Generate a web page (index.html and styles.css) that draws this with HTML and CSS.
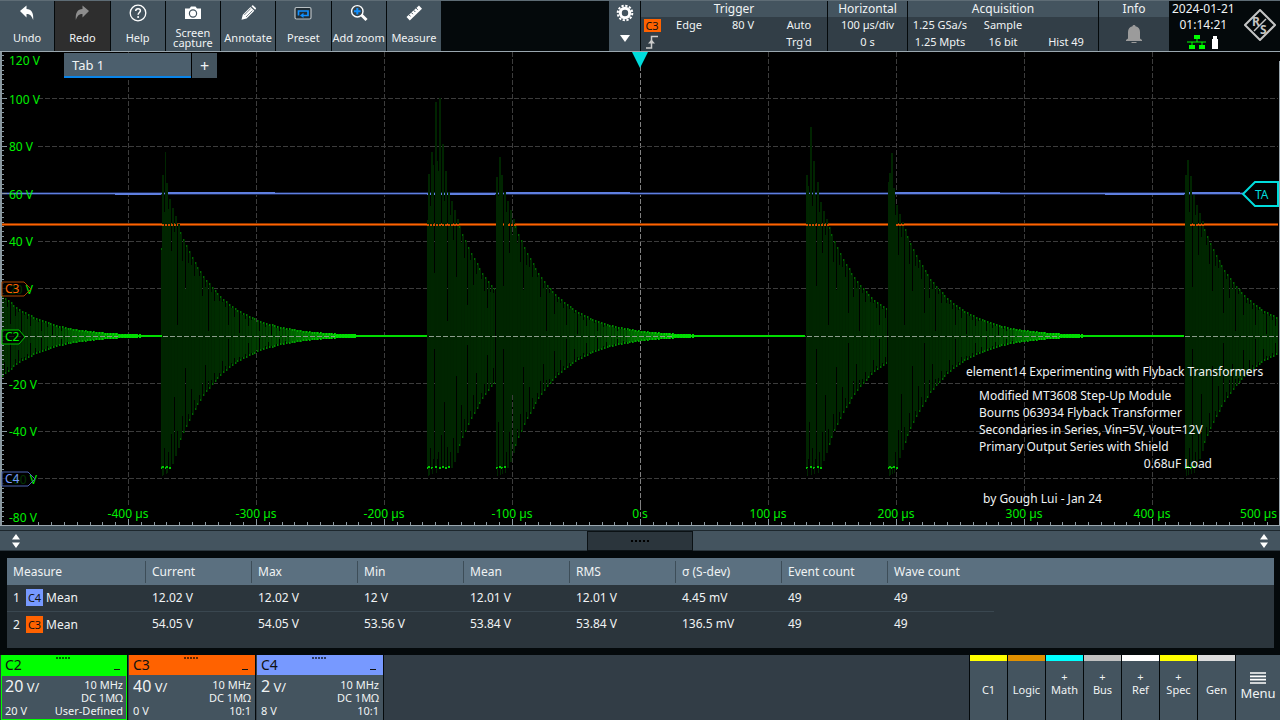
FILE: index.html
```html
<!DOCTYPE html>
<html lang="en">
<head>
    <meta charset="UTF-8">
    <meta name="viewport" content="width=device-width, initial-scale=1.0">
    <title>Oscilloscope</title>
    <link rel="stylesheet" href="styles.css">
</head>
<body>
    <header class="toolbar">
        <button class="tool">
            <svg viewBox="0 0 18 18"><path d="M2 7 8.500 1.500V5c4.800.3 7.200 3.200 6.700 11-1.600-4.400-3.300-5.800-6.700-5.900v3.400z" fill="#fff"/></svg>
            <span>Undo</span>
        </button>
        <button class="tool off">
            <svg viewBox="0 0 18 18"><path d="M16 7 9.500 1.500V5c-4.800.3-7.200 3.200-6.700 11 1.600-4.400 3.300-5.800 6.700-5.900v3.400z" fill="#8d8d8d"/></svg>
            <span>Redo</span>
        </button>
        <button class="tool">
            <svg viewBox="0 0 18 18"><circle cx="9" cy="9" r="7.800" fill="none" stroke="#fff" stroke-width="1.300"/><path d="M6.700 7c0-3.200 4.800-3 4.700-.2 0 1.700-2.300 1.800-2.300 4" fill="none" stroke="#fff" stroke-width="1.500"/><circle cx="9.100" cy="13" r="1" fill="#fff"/></svg>
            <span>Help</span>
        </button>
        <button class="tool">
            <svg viewBox="0 0 18 18"><path d="M1 4.500h4.500L7 2.500h4.500L13 4.500h4V15H1z" fill="#fff"/><circle cx="9" cy="9.500" r="3.600" fill="none" stroke="#44545f" stroke-width="1.200"/></svg>
            <span>Screen capture</span>
        </button>
        <button class="tool">
            <svg viewBox="0 0 18 18"><path d="m2.500 15.800 1.300-5L11.500 3l3.800 3.800-7.800 7.800zM12.400 2.200l1-1c.5-.5 4.100 3 3.700 3.600l-1 1z" fill="#fff"/><path d="m5.300 11 6.500-6.500M7 13l6.500-6.500" stroke="#44545f" stroke-width=".7"/></svg>
            <span>Annotate</span>
        </button>
        <button class="tool">
            <svg viewBox="0 0 18 18"><rect x="1" y="3.500" width="16" height="11.500" rx="1.500" fill="#222d34" stroke="#b9c0c4" stroke-width="1.200"/><path d="M4.500 11.500V7H14v4.500H8" fill="none" stroke="#1090ff" stroke-width="1.700"/><path d="m9.500 8.700-3.500 2.800 3.500 2.500z" fill="#1090ff"/></svg>
            <span>Preset</span>
        </button>
        <button class="tool">
            <svg viewBox="0 0 18 18"><path d="m11 10.500 5.500 5.500" stroke="#fff" stroke-width="3"/><circle cx="7.300" cy="7.300" r="5.700" fill="#34434d" stroke="#fff" stroke-width="1.400"/><path d="M7.300 4v6.600M4 7.300h6.600" stroke="#1090ff" stroke-width="2"/></svg>
            <span>Add zoom</span>
        </button>
        <button class="tool">
            <svg viewBox="0 0 18 18"><path d="M1.500 13 14 1.500l3 3.300L4.800 16.500z" fill="#fff"/><path d="m4 10.700 1.500 1.700M6.400 8.500 7.900 10.200M8.800 6.300 10.300 8M11.200 4.100l1.500 1.700" stroke="#44545f"/></svg>
            <span>Measure</span>
        </button>
        <div></div>
        <button class="gear" aria-label="Toolbar settings">
            <svg viewBox="0 0 18 18"><circle cx="9" cy="9" r="4.700" fill="none" stroke="#fff" stroke-width="3"/><circle cx="9" cy="9" r="7.300" fill="none" stroke="#fff" stroke-width="2" stroke-dasharray="2.300 1.522"/></svg>
            <svg viewBox="0 0 18 18"><path d="M4 6h10l-5 7z" fill="#fff"/></svg>
        </button>
        <section class="panel">
            <h2>Trigger</h2>
            <div class="readout trigger">
                <b class="badge c3">C3</b><span>Edge</span><span>80 V</span><span>Auto</span>
                <svg viewBox="0 0 14 14"><path d="M1 13h5.500V1.500H13" fill="none" stroke="#ccc" stroke-width="1.500"/><path d="m3 8.500 3.500-4 3.500 4z" fill="#ccc"/></svg>
                <span></span><span></span><span>Trg'd</span>
            </div>
        </section>
        <section class="panel">
            <h2>Horizontal</h2>
            <div class="readout"><span>100 µs/div</span><span>0 s</span></div>
        </section>
        <section class="panel">
            <h2>Acquisition</h2>
            <div class="readout acquisition">
                <span>1.25 GSa/s</span><span>Sample</span><span></span>
                <span>1.25 Mpts</span><span>16 bit</span><span>Hist 49</span>
            </div>
        </section>
        <section class="panel">
            <h2>Info</h2>
            <div class="readout">
                <svg class="bell" viewBox="0 0 18 20"><path d="M9 1c1 0 1.500.6 1.500 1.300C13.500 3 15 5.200 15 8v6.500l2 1.500v1H1v-1l2-1.500V8c0-2.800 1.500-5 4.500-5.700C7.500 1.600 8 1 9 1z" fill="#9b9b9b"/><path d="M6.500 18h5v1h-5z" fill="#9b9b9b"/></svg>
            </div>
        </section>
        <div class="clock">
            <div class="stamp">
                <time>2024-01-21</time>
                <time>01:14:21</time>
                <svg viewBox="0 0 32 14"><path d="M7 0h6v4H7zM2 10h6v4H2zM12 10h6v4h-6z" fill="#0f0"/><path d="M0 7h19M10 3v4M5 7v4M15 7v4" stroke="#0f0"/><path d="M26 1h4v3h1v10h-6V4h1z" fill="#fff"/></svg>
            </div>
            <svg class="logo" viewBox="0 0 32 32"><path d="M16 1 31 16 16 31 1 16z" fill="none" stroke="#c4c4c4" stroke-width="2"/><text x="8" y="17">R</text><text x="16" y="25">S</text><path d="m10 22 12-12" stroke="#c4c4c4" stroke-width="1.500"/></svg>
        </div>
    </header>

    <main class="plot">
        <svg id="graph" class="graph" viewBox="0 0 1280 475" preserveAspectRatio="none"></svg>
        <div id="labels"></div>
        <nav class="tabs"><button class="tab">Tab 1</button><button class="add">+</button></nav>
        <svg class="marker trig-time" viewBox="0 0 16 16"><path d="M0 0h16L8 16z" fill="#00dcdc"/></svg>
        <div class="marker tag-c3"><svg viewBox="0 0 31 16"><path d="M1 1h22v14H1z" fill="#000" fill-opacity=".8"/><path d="M1 1h22l7 7-7 7H1z" fill="none" stroke="#a84200"/></svg><span>C3</span></div>
        <div class="marker tag-c2"><svg viewBox="0 0 31 16"><path d="M1 1h17l6 7-6 7H1z" fill="#000" fill-opacity=".8" stroke="#00c800"/></svg><span>C2</span></div>
        <div class="marker tag-c4"><svg viewBox="0 0 35 16"><path d="M1 1h25v14H1z" fill="#000" fill-opacity=".8"/><path d="M1 1h26l7 7-7 7H1z" fill="none" stroke="#4a62b0"/></svg><span>C4</span></div>
        <div class="marker tag-ta"><svg viewBox="0 0 38 28"><path d="M2 14 14 2h23v24H14z" fill="#000" stroke="#00dcdc" stroke-width="2"/></svg><span>TA</span></div>
        <div class="notes">
            <p class="title">element14 Experimenting with Flyback Transformers</p>
            <p>Modified MT3608 Step-Up Module</p>
            <p>Bourns 063934 Flyback Transformer</p>
            <p>Secondaries in Series, Vin=5V, Vout=12V</p>
            <p>Primary Output Series with Shield</p>
            <p class="load">0.68uF Load</p>
            <p class="author">by Gough Lui - Jan 24</p>
        </div>
    </main>

    <div class="splitter">
        <svg viewBox="0 0 8 14"><path d="M0 5.500h8L4 0zM0 8.500h8L4 14z" fill="#fff"/></svg>
        <button class="grip" aria-label="Resize"><i></i><i></i><i></i><i></i><i></i></button>
        <svg viewBox="0 0 8 14"><path d="M0 5.500h8L4 0zM0 8.500h8L4 14z" fill="#fff"/></svg>
    </div>

    <section class="results">
        <table>
            <colgroup><col class="name"><col span="8" class="value"><col></colgroup>
            <thead>
                <tr><th>Measure</th><th>Current</th><th>Max</th><th>Min</th><th>Mean</th><th>RMS</th><th>σ (S-dev)</th><th>Event count</th><th>Wave count</th><th class="rest"></th></tr>
            </thead>
            <tbody>
                <tr><td><span class="num">1</span><b class="badge c4">C4</b>Mean</td><td>12.02 V</td><td>12.02 V</td><td>12 V</td><td>12.01 V</td><td>12.01 V</td><td>4.45 mV</td><td>49</td><td>49</td><td class="rest"></td></tr>
                <tr><td><span class="num">2</span><b class="badge c3">C3</b>Mean</td><td>54.05 V</td><td>54.05 V</td><td>53.56 V</td><td>53.84 V</td><td>53.84 V</td><td>136.5 mV</td><td>49</td><td>49</td><td class="rest"></td></tr>
            </tbody>
        </table>
    </section>

    <footer class="signals">
        <section class="channel c2 active">
            <h3><span>C2</span><em><i></i><i></i><i></i><i></i><i></i></em><button aria-label="Minimize C2"></button></h3>
            <div class="setup"><p><big>20</big> V/</p><p>10 MHz<br>DC 1MΩ</p><p>20 V</p><p>User-Defined</p></div>
        </section>
        <section class="channel c3">
            <h3><span>C3</span><em><i></i><i></i><i></i><i></i><i></i></em><button aria-label="Minimize C3"></button></h3>
            <div class="setup"><p><big>40</big> V/</p><p>10 MHz<br>DC 1MΩ</p><p>0 V</p><p>10:1</p></div>
        </section>
        <section class="channel c4">
            <h3><span>C4</span><em><i></i><i></i><i></i><i></i><i></i></em><button aria-label="Minimize C4"></button></h3>
            <div class="setup"><p><big>2</big> V/</p><p>10 MHz<br>DC 1MΩ</p><p>8 V</p><p>10:1</p></div>
        </section>
        <nav class="keys">
            <button class="key yellow">C1</button>
            <button class="key amber">Logic</button>
            <button class="key cyan"><span>+</span>Math</button>
            <button class="key silver"><span>+</span>Bus</button>
            <button class="key white"><span>+</span>Ref</button>
            <button class="key yellow"><span>+</span>Spec</button>
            <button class="key light">Gen</button>
            <button class="menu"><svg viewBox="0 0 16 12"><path d="M0 1h16M0 4.300h16M0 7.600h16M0 11h16" stroke="#fff" stroke-width="1.700"/></svg>Menu</button>
        </nav>
    </footer>
    <script src="scope.js"></script>
</body>
</html>
```
FILE: styles.css
```css
* {
    box-sizing: border-box;
}
body {
    margin: 0;
    min-height: 100vh;
    display: flex;
    flex-direction: column;
    background: #04090b;
    color: #f0f3f4;
    font-family: "Noto Sans", sans-serif;
    font-size: 12px;
    line-height: 16px;
}
button {
    border: 0;
    padding: 0;
    margin: 0;
    color: inherit;
    font: inherit;
    background: #44545f;
}
h2, h3, p {
    margin: 0;
    font-weight: normal;
}
svg {
    display: block;
}

/* Top toolbar */
.toolbar {
    display: grid;
    grid-template-columns: repeat(8, 217fr) 664fr 124fr 744fr 316fr 760fr 280fr 440fr;
    gap: 1px;
    height: 51px;
    border-top: 1px solid #5e6c75;
    background: #04090b;
}
.tool {
    display: flex;
    flex-direction: column;
    align-items: center;
    min-width: 0;
    font-size: 11px;
    line-height: 10px;
    padding-top: 3px;
}
.tool svg {
    width: 18px;
    height: 18px;
    flex: none;
}
.tool span {
    flex: 1;
    display: flex;
    align-items: center;
    padding-top: 3px;
}
.tool.off {
    background: #2e2e2e;
}
.gear {
    display: flex;
    flex-direction: column;
    align-items: center;
    padding-top: 3px;
    gap: 7px;
}
.gear svg {
    width: 18px;
    height: 18px;
}
.panel {
    display: flex;
    flex-direction: column;
    min-width: 0;
    background: #323e47;
}
.panel h2 {
    background: #44545f;
    font-size: 12px;
    line-height: 16px;
    text-align: center;
}
.readout {
    flex: 1;
    display: grid;
    grid-auto-rows: 1fr;
    place-items: center;
    padding-bottom: 1px;
    font-size: 11px;
    line-height: 16px;
    white-space: nowrap;
}
.trigger {
    grid-template-columns: 22px 52px 56px 1fr;
}
.trigger svg {
    width: 14px;
    height: 14px;
}
.acquisition {
    grid-template-columns: 64px 62px 64px;
}
.bell {
    width: 18px;
    height: 20px;
}
.badge {
    display: inline-block;
    width: 17px;
    height: 17px;
    font-size: 11px;
    line-height: 17px;
    font-weight: normal;
    text-align: center;
    color: #111;
}
.trigger .badge {
    height: 13px;
    line-height: 13px;
}
.clock {
    display: flex;
    justify-content: space-between;
    align-items: center;
    padding: 0 4px 2px 2px;
}
.stamp {
    display: flex;
    flex-direction: column;
    align-items: center;
}
.stamp svg {
    width: 32px;
    height: 14px;
    margin-top: 2px;
}
.logo {
    width: 32px;
    height: 32px;
}
.logo text {
    fill: #c4c4c4;
    font-size: 12px;
    font-weight: bold;
}

/* Waveform display */
.plot {
    position: relative;
    flex: 1;
    min-height: 300px;
    overflow: hidden;
    background: #000;
}
.graph {
    position: absolute;
    width: 100%;
    height: 100%;
}
.axis {
    position: absolute;
    color: #00f000;
    white-space: nowrap;
}
.axis.y {
    left: 9px;
    transform: translateY(-50%);
}
.axis.x {
    bottom: 4px;
    transform: translateX(-50%);
}
.axis.x.last {
    right: 3px;
    transform: none;
}
.tabs {
    position: absolute;
    left: 5%;
    top: 2px;
    display: flex;
    gap: 1px;
}
.tabs button {
    height: 25px;
    font-size: 13px;
}
.tabs .tab {
    width: 127px;
    text-align: left;
    padding-left: 8px;
    border-bottom: 2px solid #0a84e8;
    background: #4c5f6d;
}
.tabs .add {
    width: 25px;
    font-size: 16px;
}
.marker {
    position: absolute;
}
.marker span {
    position: absolute;
    left: 4px;
    top: 0;
    line-height: 16px;
}
.trig-time {
    left: 50%;
    top: 1px;
    width: 16px;
    margin-left: -8px;
}
.tag-c3 {
    left: 1px;
    top: 48.500%;
    width: 31px;
    color: #ff6200;
}
.tag-c2 {
    left: 1px;
    top: 58.500%;
    width: 31px;
    color: #00f000;
}
.tag-c4 {
    left: 1px;
    top: 88.500%;
    width: 35px;
    color: #7799ff;
}
.tag-ta {
    right: 1px;
    top: 27.200%;
    width: 38px;
    color: #00dcdc;
}
.tag-ta span {
    left: 14px;
    line-height: 30px;
}
.notes {
    position: absolute;
    right: 10px;
    bottom: 19px;
    width: 304px;
    line-height: 17px;
    white-space: nowrap;
}
.notes p {
    padding-left: 13px;
}
.notes .title {
    padding-left: 0;
    margin-bottom: 7px;
}
.notes .load {
    padding: 0 58px 0 0;
    text-align: right;
}
.notes .author {
    padding-left: 17px;
    margin-top: 18px;
}

/* Splitter */
.splitter {
    display: flex;
    justify-content: space-between;
    align-items: center;
    height: 25px;
    padding: 5px 12px 0;
    border-bottom: 1px solid #2b363d;
    background: linear-gradient(#40505a 4px, #1d272d 4px, #1d272d 5px, #44545f 5px);
}
.splitter svg {
    width: 8px;
    height: 14px;
}
.grip {
    display: flex;
    justify-content: center;
    align-items: center;
    gap: 2px;
    width: 106px;
    height: 20px;
    border: 1px solid #0b1114;
    background: #2b353c;
}
.grip i {
    width: 2px;
    height: 2px;
    background: #000;
}

/* Measurement results */
.results {
    margin: 7px 6px 7px 7px;
    height: 90px;
    background: #2b353c;
}
table {
    width: 100%;
    table-layout: fixed;
    border-collapse: collapse;
}
.name {
    width: 139px;
}
.value {
    width: 106px;
}
th {
    height: 27px;
    padding: 0 6px;
    text-align: left;
    font-weight: normal;
    background: linear-gradient(#3d4d58, #3d4d58) right center / 1px 22px no-repeat #5b7080;
}
th:nth-last-child(2), th.rest {
    background: #5b7080;
}
td {
    height: 26px;
    padding: 0 6px;
    border-bottom: 1px solid #3a4750;
}
tr:last-child td, td.rest {
    border-bottom: 0;
}
td .badge {
    margin-right: 3px;
}
.num {
    display: inline-block;
    width: 13px;
}
.badge.c3 {
    background: #ff6200;
}
.badge.c4 {
    background: #7799ff;
}

/* Signal bar */
.signals {
    display: flex;
    gap: 1px;
    height: 65px;
    padding-left: 1px;
    background: #323d46;
}
.channel {
    display: flex;
    flex-direction: column;
    width: 127px;
    border-right: 1px solid #04090b;
    background: #44545f;
}
.channel h3 {
    display: grid;
    grid-template-columns: 1fr auto 1fr;
    height: 20px;
    padding: 0 7px 0 4px;
    font-size: 14px;
    line-height: 20px;
    color: #111;
}
.channel em {
    display: flex;
    gap: 1px;
    padding-top: 2px;
}
.channel em i {
    width: 2px;
    height: 2px;
    background: rgba(0, 0, 0, .6);
}
.channel h3 button {
    justify-self: end;
    align-self: end;
    width: 6px;
    height: 10px;
    margin-bottom: 5px;
    border-bottom: 1px solid #111;
    background: none;
}
.channel.c2 h3 {
    background: #00ff00;
}
.channel.c3 h3 {
    background: #ff6200;
}
.channel.c4 h3 {
    background: #7799ff;
}
.channel.active .setup {
    box-shadow: inset 0 0 0 1px #00ff00;
}
.setup {
    flex: 1;
    display: grid;
    grid-template-columns: auto 1fr;
    grid-template-rows: 26px 13px;
    padding: 3px 4px 0;
    font-size: 11px;
    line-height: 13px;
}
.setup p:nth-child(even) {
    text-align: right;
}
.setup p:first-child {
    font-size: 13px;
    line-height: 16px;
}
.setup big {
    font-size: 16px;
}
.keys {
    display: flex;
    gap: 1px;
    margin-left: auto;
    padding-left: 1px;
    background: #04090b;
}
.key {
    display: flex;
    flex-direction: column;
    justify-content: flex-end;
    align-items: center;
    width: 37px;
    padding-bottom: 24px;
    border-top: 6px solid;
    font-size: 11px;
    line-height: 13px;
}
.key.yellow {
    border-color: #ffff00;
}
.key.amber {
    border-color: #e09000;
}
.key.cyan {
    border-color: #00ffff;
}
.key.silver {
    border-color: #c0c0c0;
}
.key.white {
    border-color: #ffffff;
}
.key.light {
    border-color: #dcdcdc;
}
.menu {
    width: 44px;
    font-size: 13px;
    padding-bottom: 3px;
}
.menu svg {
    width: 16px;
    height: 12px;
    margin: 0 auto 1px;
}
```
FILE: scope.js
```js
const graph = document.getElementById('graph');
const labels = document.getElementById('labels');
const ZERO = 285; // y of 0 V on the C2 scale
const TAU = 41.5; // decay of the ringing
const CLIP = 132;

// Each burst: start, end, ref (x where the ringing is 108 high) and the first peaks
const bursts = [
    { start: 2, end: 162, ref: -38, peaks: [] },
    { start: 161, end: 427, ref: 179, clip: 170, peaks: [[161, 88], [162, 161], [165, 184], [166, 153]] },
    { start: 427, end: 495, ref: 460, clip: 450, peaks: [[427, 116], [428, 162], [431, 184], [435, 234], [439, 238], [442, 192], [445, 165]] },
    { start: 496, end: 805, ref: 516, clip: 506, peaks: [[496, 159], [499, 179], [501, 161]] },
    { start: 806, end: 887, ref: 829, clip: 822, peaks: [[806, 161], [810, 209], [813, 175], [817, 154]] },
    { start: 888, end: 1184, ref: 904, clip: 896, peaks: [[888, 154], [889, 163], [891, 183], [893, 148]] },
    { start: 1184, end: 1278, ref: 1204, clip: 1193, peaks: [[1185, 161], [1187, 176], [1190, 160]] }
];
const depth = [0.12, 0.2, 0.66, 0.1, 0.35, 0.15, 0.9, 0.12, 0.25, 0.5, 0.16];

function draw(tag, attrs) {
    const el = document.createElementNS('http://www.w3.org/2000/svg', tag);
    for (const key in attrs) el.setAttribute(key, attrs[key]);
    graph.appendChild(el);
}

function line(d, stroke, extra) {
    draw('path', Object.assign({ d, stroke, fill: 'none', 'shape-rendering': 'crispEdges' }, extra));
}

function bar(x, top, bottom, colour) {
    line(`M${x + 0.5} ${top}V${bottom}`, colour);
}

function shade(amp, tip) {
    const g = Math.min(225, (tip ? 95 : 35) + 900 / Math.pow(amp + 2, 1.2));
    return `rgb(0,${Math.round(g)},0)`;
}

function drawGrid() {
    for (let i = 1; i < 10; i++) {
        line(`M${i * 128 + 0.5} 1V454`, i === 5 ? '#808080' : '#3c3c3c', { 'stroke-dasharray': '5 2' });
    }
    line('M640.5 454V474', '#808080', { 'stroke-dasharray': '5 2' });
    for (let i = 1; i < 10; i++) {
        line(`M38 ${i * 47.5 + 0.25}H1278`, '#3c3c3c', { 'stroke-dasharray': '5 2' });
    }
}

function drawTrace(y, colour, edge) {
    line(`M2 ${y}H1278`, edge, { 'stroke-width': 3 });
    line(`M2 ${y}H1278`, colour);
}

function drawBurst(b) {
    const amp = x => 108 * Math.exp(-(x - b.ref) / TAU);
    const spikes = b.peaks.slice();
    let x = spikes.length ? spikes[spikes.length - 1][0] + 3 : b.start;
    for (; x < b.end && amp(x) > 0.9; x += 2.85) spikes.push([Math.round(x), amp(x)]);

    spikes.forEach(([px, a], i) => {
        const low = px <= b.clip ? CLIP : Math.min(a, CLIP);
        const next = i + 1 < spikes.length ? spikes[i + 1][0] : px + 3;
        for (let c = px; c < next && c < b.end; c++) {
            const body = Math.min(a, amp(c));
            if (c <= px + 1) {
                bar(c, ZERO - a, ZERO + low, shade(a));
            } else if (c === next - 1 && a > 8) {
                // dark slots between the oscillations
                bar(c, ZERO - body * (1 - depth[i % 11]), ZERO + Math.min(body, CLIP) * (1 - depth[(i + 4) % 11]), shade(a * 2));
            } else {
                bar(c, ZERO - body * 0.93, ZERO + Math.min(low, body) * 0.93, shade(a * 0.8));
            }
        }
        if (a < 110) {
            bar(px, ZERO - a, ZERO - a + 2, shade(a, true));
            bar(px, ZERO + low - 2, ZERO + low, shade(a, true));
        }
        if (px <= b.clip) {
            line(`M${px} ${ZERO + CLIP - i % 2}h2`, '#00c800', { 'stroke-width': 2 });
            if (i < 4) bar(px + 1, ZERO + CLIP, ZERO + CLIP + 8 - i, '#002600');
        }
    });
}

// settled trace between the end of the ringing and the next burst
function drawTail(b) {
    const tail = Math.round(b.ref + TAU * Math.log(108 / 2.5));
    if (tail < b.end) {
        draw('rect', { x: tail, y: ZERO - 1, width: b.end - tail, height: 2, fill: '#00dc00' });
    }
}

function drawFrame() {
    line(`M2 ${ZERO + 0.5}H1278`, '#8c9c8c', { 'stroke-dasharray': '5 2' });
    line('M0 .5H1280M0 474H1280M1279.5 10V474', '#9aa7af');
    line('M1 1V474', '#8a98a0', { 'stroke-width': 2 });
    for (let i = 1; i < 100; i++) {
        line(`M2 ${i * 4.75}h${i % 10 ? 2 : 5}`, '#8a98a0');
    }
    for (let i = 3; i < 100; i++) {
        line(`M${Math.round(i * 12.8) + 0.5} 474v${i % 10 ? -3 : -6}`, '#8a98a0');
    }
}

function drawLabels() {
    for (let v = 120; v >= -80; v -= 20) {
        if (v === 0) continue; // the C2 tag stands there
        const y = v === 120 ? 10 : v === -80 ? 467 : ZERO + 1 - v * 2.375;
        labels.innerHTML += `<span class="axis y" style="top: ${y / 4.75}%">${v} V</span>`;
    }
    for (let t = -400; t <= 400; t += 100) {
        labels.innerHTML += `<span class="axis x" style="left: ${50 + t / 10}%">${t ? t + ' µs' : '0 s'}</span>`;
    }
    labels.innerHTML += '<span class="axis x last">500 µs</span>';
}

drawGrid();
drawTrace(142.5, '#5f7fe0', '#1c2850');
// C4 rises a little after each burst
line('M168 141.5H275M505 141.5H630M895 141.5H1000M1188 141.5H1240', '#5f7fe0');
line('M115 143.5H161M427 143.5H495M1105 143.5H1184', '#5f7fe0');
drawTrace(173.5, '#ff6200', '#8a3500');
bursts.forEach(drawBurst);
line('M162 173.5H178M427 173.5H460M508 173.5H516M806 173.5H830M896 173.5H904M1190 173.5H1204', '#d05000', { 'stroke-dasharray': '2 1', 'stroke-width': 2 });
drawFrame();
bursts.forEach(drawTail);
drawLabels();
```
